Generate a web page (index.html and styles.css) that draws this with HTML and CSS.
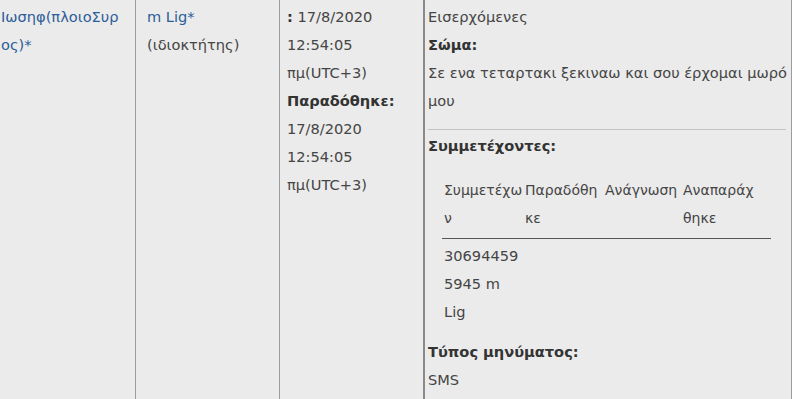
FILE: index.html
```html
<!DOCTYPE html>
<html lang="el">
<head>
<meta charset="utf-8">
<link rel="stylesheet" href="styles.css">
</head>
<body>
<div class="row">
  <div class="cell c1"><a class="lnk" href="#">Ιωσηφ(πλοιοΣυρος)*</a></div>
  <div class="cell c2"><a class="lnk" href="#">m Lig*</a><br>(ιδιοκτήτης)</div>
  <div class="cell c3"><b>:</b> 17/8/2020 12:54:05 πμ(UTC+3)<br><b>Παραδόθηκε:</b><br>17/8/2020 12:54:05 πμ(UTC+3)</div>
  <div class="cell c4">
    <div>Εισερχόμενες</div>
    <div class="lbl">Σώμα:</div>
    <div>Σε ενα τεταρτακι ξεκιναω και σου έρχομαι μωρό μου</div>
    <div class="sep"></div>
    <div class="lbl">Συμμετέχοντες:</div>
    <table class="parts">
      <thead>
        <tr><th class="pa">Συμμετέχων</th><th class="pb">Παραδόθηκε</th><th class="pc">Ανάγνωση</th><th class="pd">Αναπαράχθηκε</th></tr>
      </thead>
      <tbody>
        <tr><td class="pa">306944595945 m Lig</td><td class="pb"></td><td class="pc"></td><td class="pd"></td></tr>
      </tbody>
    </table>
    <div class="lbl">Τύπος μηνύματος:</div>
    <div>SMS</div>
  </div>
</div>
</body>
</html>
```

FILE: styles.css
```css
html, body {
  margin: 0;
  padding: 0;
  background: #ebebeb;
}
body {
  font-family: "DejaVu Sans", Verdana, sans-serif;
  font-size: 14.6px;
  line-height: 28px;
  color: #454545;
}
.row {
  display: grid;
  grid-template-columns: 135px 144px 144px 369px;
  height: 399px;
}
.cell {
  padding-top: 3px;
  word-break: break-all;
  box-sizing: border-box;
}
.c1 { padding-left: 1px; padding-right: 14px; }
.c2 { border-left: 1px solid #9c9c9c; padding-left: 11px; padding-right: 4px; }
.c3 { border-left: 1px solid #9c9c9c; padding-left: 7px; padding-right: 4px; word-break: normal; }
.c4 {
  border-left: 2px solid #8a8a8a;
  border-right: 1px solid #9c9c9c;
  padding-left: 3px;
  padding-right: 1px;
  word-break: normal;
}
.lnk { color: #2c5d99; text-decoration: none; }
b, .lbl { font-weight: bold; color: #333; }
.sep {
  height: 1px;
  background: #c4c4c4;
  margin: 14px 4px 2px 0;
}
.parts {
  border-collapse: collapse;
  margin: 16px 0 12px 14px;
  width: 329px;
  table-layout: fixed;
}
.parts th, .parts td {
  box-sizing: border-box;
  padding: 0;
  font-weight: normal;
  text-align: left;
  vertical-align: top;
  overflow-wrap: break-word;
  word-break: normal;
  color: #454545;
}
.parts th {
  font-size: 14px;
  border-bottom: 1px solid #555;
  padding-bottom: 6px;
}
.parts td { padding-top: 3px; }
.parts .pa { width: 83px; padding-left: 2px; }
.parts .pb { width: 80px; padding-right: 4px; }
.parts .pc { width: 78px; }
.parts .pd { width: 88px; padding-right: 12px; }
```
